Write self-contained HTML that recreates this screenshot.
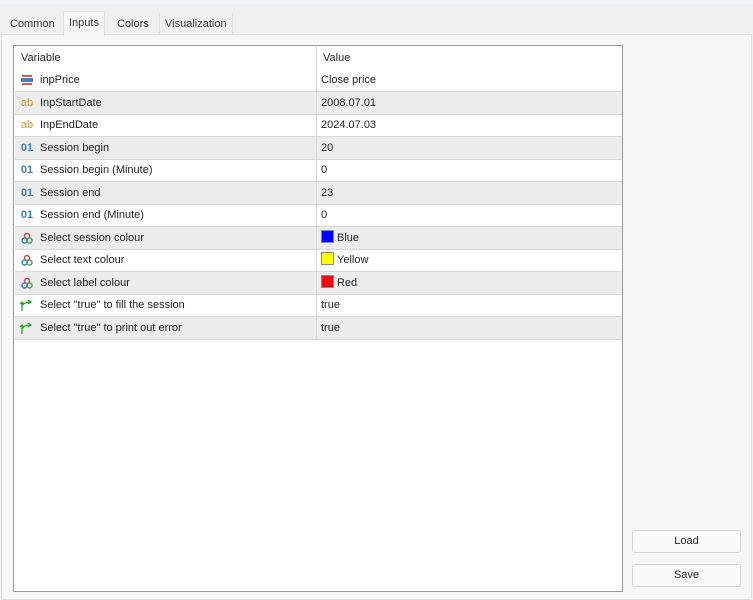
<!DOCTYPE html><html><head><style>
body{margin:0;width:753px;height:600px;background:#efefef;font-family:"Liberation Sans",sans-serif;font-size:11px;color:#222;position:relative;overflow:hidden}
.top{position:absolute;left:0;top:0;width:753px;height:4px;background:#eef3f9}
.tab{position:absolute;top:13px;height:21px;line-height:22px;padding:0 5px;font-size:11px;color:#333}
.panel{position:absolute;left:1px;top:34px;width:749px;height:564px;background:#f7f7f7;border:1px solid #e2e2e2}
.tbl{position:absolute;left:13px;top:45px;width:608px;height:545px;background:#fff;border:1px solid #999}
.row{position:absolute;left:1px;width:607px;height:22px;border-bottom:1px solid #d8d8d8;line-height:22px}
.row.g{background:#ececec}
.c1{position:absolute;left:25px}
.c2{position:absolute;left:306px}
.ic{position:absolute;left:4px;top:0;width:16px;height:22px;text-align:center;font-size:11px;display:flex;align-items:center;justify-content:center}
.div{position:absolute;left:302px;top:1px;width:1px;height:292px;background:#d8d8d8}
.sw{display:inline-block;width:11px;height:11px;border:1px solid #888;vertical-align:-2px;margin-right:3px}
.btn{position:absolute;left:632px;width:107px;height:21px;border:1px solid #d6d6d6;border-radius:3px;background:#fbfbfb;text-align:center;line-height:21px;color:#222}
</style></head><body>
<div class="top"></div>
<div class="panel"></div>
<div class="tab" style="left:5px">Common</div>
<div class="tab" style="left:63px;top:11px;height:24px;background:#f7f7f7;border:1px solid #e2e2e2;border-bottom:none">Inputs</div>
<div class="tab" style="left:112px">Colors</div>
<div class="tab" style="left:159px;border-left:1px solid #e2e2e2;border-right:1px solid #e2e2e2">Visualization</div>
<div class="tbl">
<div class="row" style="top:1px;border:none"><span class="c1" style="left:6px">Variable</span><span class="c2" style="left:308px">Value</span></div>
<div class="row" style="top:23px"><span class="ic"><svg width="12" height="12"><rect x="1" y="1" width="10" height="2" fill="#d55"/><rect x="0" y="4" width="12" height="4" fill="#3a7fc8"/><rect x="1" y="9" width="10" height="2" fill="#d55"/></svg></span><span class="c1">inpPrice</span><span class="c2">Close price</span></div>
<div class="row g" style="top:45.5px"><span class="ic" style="color:#d49a2a">ab</span><span class="c1">InpStartDate</span><span class="c2">2008.07.01</span></div>
<div class="row" style="top:68px"><span class="ic" style="color:#d49a2a">ab</span><span class="c1">InpEndDate</span><span class="c2">2024.07.03</span></div>
<div class="row g" style="top:90.5px"><span class="ic" style="color:#3a7fb8;font-weight:bold">01</span><span class="c1">Session begin</span><span class="c2">20</span></div>
<div class="row" style="top:113px"><span class="ic" style="color:#3a7fb8;font-weight:bold">01</span><span class="c1">Session begin (Minute)</span><span class="c2">0</span></div>
<div class="row g" style="top:135.5px"><span class="ic" style="color:#3a7fb8;font-weight:bold">01</span><span class="c1">Session end</span><span class="c2">23</span></div>
<div class="row" style="top:158px"><span class="ic" style="color:#3a7fb8;font-weight:bold">01</span><span class="c1">Session end (Minute)</span><span class="c2">0</span></div>
<div class="row g" style="top:180.5px"><span class="ic"><svg width="12" height="12"><circle cx="6" cy="4" r="2.5" fill="none" stroke="#d44" stroke-width="1.5"/><circle cx="3.5" cy="8.5" r="2.5" fill="none" stroke="#38b" stroke-width="1.5"/><circle cx="8.5" cy="8.5" r="2.5" fill="none" stroke="#4a4" stroke-width="1.5"/></svg></span><span class="c1">Select session colour</span><span class="c2"><span class="sw" style="background:#00f"></span>Blue</span></div>
<div class="row" style="top:203px"><span class="ic"><svg width="12" height="12"><circle cx="6" cy="4" r="2.5" fill="none" stroke="#d44" stroke-width="1.5"/><circle cx="3.5" cy="8.5" r="2.5" fill="none" stroke="#38b" stroke-width="1.5"/><circle cx="8.5" cy="8.5" r="2.5" fill="none" stroke="#4a4" stroke-width="1.5"/></svg></span><span class="c1">Select text colour</span><span class="c2"><span class="sw" style="background:#ff0"></span>Yellow</span></div>
<div class="row g" style="top:225.5px"><span class="ic"><svg width="12" height="12"><circle cx="6" cy="4" r="2.5" fill="none" stroke="#d44" stroke-width="1.5"/><circle cx="3.5" cy="8.5" r="2.5" fill="none" stroke="#38b" stroke-width="1.5"/><circle cx="8.5" cy="8.5" r="2.5" fill="none" stroke="#4a4" stroke-width="1.5"/></svg></span><span class="c1">Select label colour</span><span class="c2"><span class="sw" style="background:#f00"></span>Red</span></div>
<div class="row" style="top:248px"><span class="ic"><svg width="16" height="14"><path d="M3 13V4M3 4L1 6M3 4L5 6M3 8Q5 4 11 4M9 2L12 4L9 6" fill="none" stroke="#2a2" stroke-width="1.3"/></svg></span><span class="c1">Select "true" to fill the session</span><span class="c2">true</span></div>
<div class="row g" style="top:270.5px"><span class="ic"><svg width="16" height="14"><path d="M3 13V4M3 4L1 6M3 4L5 6M3 8Q5 4 11 4M9 2L12 4L9 6" fill="none" stroke="#2a2" stroke-width="1.3"/></svg></span><span class="c1">Select "true" to print out error</span><span class="c2">true</span></div>
<div class="div"></div>
</div>
<div class="btn" style="top:530px">Load</div>
<div class="btn" style="top:564px">Save</div>
</body></html>
